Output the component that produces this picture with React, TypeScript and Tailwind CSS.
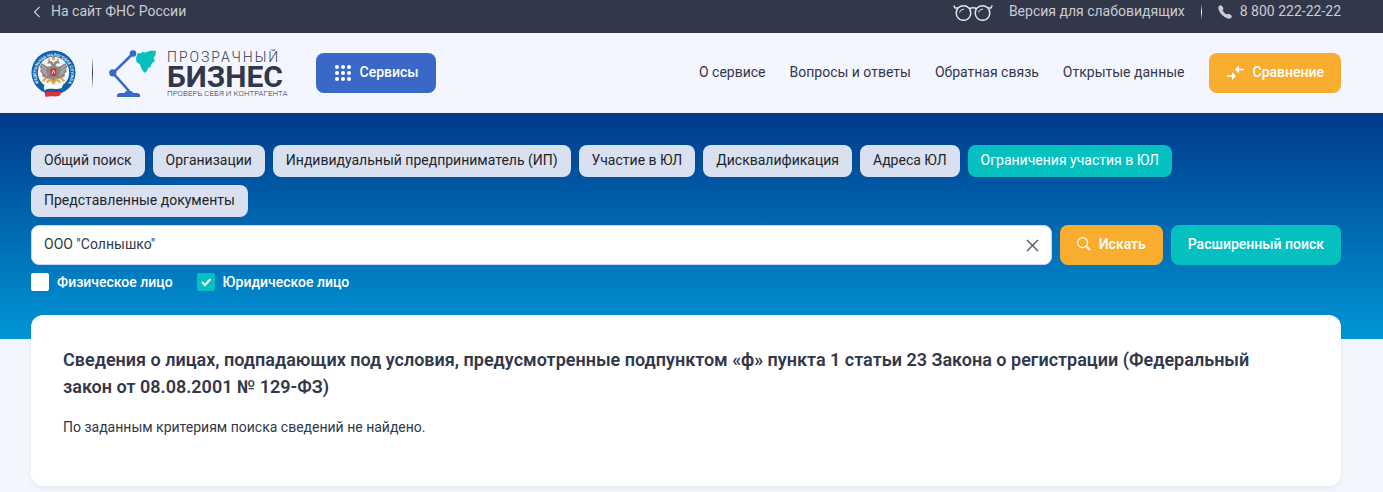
import { useState } from "react";

const tabs = [
  "Общий поиск",
  "Организации",
  "Индивидуальный предприниматель (ИП)",
  "Участие в ЮЛ",
  "Дисквалификация",
  "Адреса ЮЛ",
  "Ограничения участия в ЮЛ",
  "Представленные документы",
];

const links = ["О сервисе", "Вопросы и ответы", "Обратная связь", "Открытые данные"];

function Emblem() {
  return (
    <svg width="45" height="49" viewBox="0 0 46 50" aria-hidden="true">
      <defs>
        <path id="ring" d="M9.600 37 A17.800 17.800 0 1 1 36.400 37" />
      </defs>
      <circle cx="23" cy="24" r="22.500" fill="#0f61a8" />
      <circle cx="23" cy="24" r="16" fill="#f4f6fa" />
      <text fill="#e6f0f8" fontSize="4.200" fontWeight="700" fontFamily="Roboto, sans-serif">
        <textPath href="#ring" startOffset="50%" textAnchor="middle">ФЕДЕРАЛЬНАЯ НАЛОГОВАЯ СЛУЖБА</textPath>
      </text>
      <g fill="#8d8789">
        <path d="M21 17 C16 20 14 15 10.500 14.500 L9 18 L10 20 L9.500 23 L11.500 25 L11.500 28 L14 29 L15 31 L18 30 L20 33 L26 33 L28 30 L31 31 L32 29 L34.500 28 L34.500 25 L36.500 23 L36 20 L37 18 L35.500 14.500 C32 15 30 20 25 17 L26.500 14.500 L29.500 15 L28 12 L24.500 12.500 L23 15 L21.500 12.500 L18 12 L16.500 15 L19.500 14.500 Z" />
      </g>
      <path d="M11 17 L16 21 M11 20 L16 24 M12 23 L17 27 M35 17 L30 21 M35 20 L30 24 M34 23 L29 27" stroke="#d9d6d5" strokeWidth="0.800" />
      <path d="M21 8 h4 l-1 3.500 h-2 Z M17 10 h3 l-0.500 2 h-2 Z M26 10 h3 l-0.500 2 h-2 Z" fill="#d3a650" />
      <rect x="20" y="20" width="6" height="7.500" rx="1" fill="#d8302f" />
      <path d="M21.500 25.500 L23 21.500 L24.500 25" stroke="#f1e6dc" fill="none" />
      <path d="M12 33 L16 29 M30 29 L34 33 M16 34 L20 31 L23 35 L26 31 L30 34" stroke="#dba84a" strokeWidth="2.200" fill="none" />
      <path d="M13 38 C18 34 26 39 33 35 L31 41 C26 43 19 40 14 43.500 Z" fill="#fff" />
      <path d="M14 42 C19 39 26 42.500 31.500 39.500 L31 43.500 C26 46 20 43 14.500 46 Z" fill="#244fa6" />
      <path d="M14 45 C20 42 25 45.500 31 43 L30 47 C26 50 20 47 15 49 Z" fill="#dc3339" />
    </svg>
  );
}

function Lamp() {
  return (
    <svg width="48" height="48" viewBox="0 0 48 48" aria-hidden="true">
      <path d="M23.500 5 L4 24 L20 42" fill="none" stroke="#3a68c9" strokeWidth="2.600" />
      <circle cx="24" cy="4.500" r="3.300" fill="#3a68c9" />
      <circle cx="3.800" cy="23.800" r="3.600" fill="#3a68c9" />
      <path d="M8 48 V46.500 Q8 44 11 44 H15 Q20 38.500 24.500 44 H28 Q31 44 31 46.500 V48 Z" fill="#3a68c9" />
      <path d="M28 6 L29 4 L32 4.500 L33 3 L36.500 3.500 L41 1.800 L47 1.800 L46.500 6 L44.500 9 L46 12 L43 14 L41.500 18 L39 19 L38 22 L36 24 L33.500 21.500 L32 18.500 L31 15.500 L27.500 13 L27 9 Z" fill="#06c0bd" />
    </svg>
  );
}

function Glasses() {
  return (
    <svg width="40" height="18" viewBox="0 0 40 18" fill="none" stroke="#e3e5ea" strokeWidth="1.500" aria-hidden="true">
      <circle cx="10.500" cy="10" r="7.300" />
      <circle cx="29.500" cy="10" r="7.300" />
      <path d="M16.500 5.500 Q20 4 23.500 5.500 M5 5 H2 L0.800 2.500 M35 5 H38 L39.200 2.500" />
      <path d="M6.500 9.500 Q7 6.500 11 6 M25.500 9.500 Q26 6.500 30 6" strokeWidth="1" />
    </svg>
  );
}

export default function App() {
  const [active, setActive] = useState("Ограничения участия в ЮЛ");
  const [query, setQuery] = useState('ООО "Солнышко"');
  const [person, setPerson] = useState(false);
  const [legal, setLegal] = useState(true);

  return (
    <div className="min-h-screen bg-[#f4f6ff] font-[Roboto,sans-serif] text-sm text-[#32374a]">
      <div className="flex items-center justify-between bg-[#32374a] pr-[42px] pb-[10px] pl-[31px] leading-[23px] text-[#c9ccd4]">
        <a href="#" className="flex items-center gap-2">
          <svg width="12" height="12" viewBox="0 0 12 12" fill="none" stroke="currentColor" strokeWidth="1.200" aria-hidden="true">
            <path d="M8.500 1 L3.500 6 L8.500 11" />
          </svg>
          На сайт ФНС России
        </a>
        <div className="flex items-center gap-4">
          <a href="#" className="flex items-center gap-4">
            <Glasses />
            Версия для слабовидящих
          </a>
          <span className="h-4 w-px bg-gradient-to-b from-[#32374a] via-white to-[#32374a]" />
          <a href="tel:88002222222" className="flex items-center gap-2">
            <svg width="14" height="14" viewBox="0 0 14 14" fill="currentColor" aria-hidden="true">
              <path d="M1 1 Q2.800 -0.500 3.800 0.800 L5.200 2.800 Q5.700 3.700 5 4.400 L4.500 5.200 Q5.800 8 8.800 9.500 L9.700 9 Q10.400 8.500 11.200 9 L13.200 10.300 Q14.500 11.300 13 13 Q11.500 14.400 8.500 13 Q3 10.500 0.800 5 Q-0.300 2.200 1 1 Z" />
            </svg>
            8 800 222-22-22
          </a>
        </div>
      </div>

      <header className="flex h-20 items-center justify-between pr-[42px] pl-[31px]">
        <div className="flex items-center gap-7">
          <a href="#" className="flex items-center gap-4">
            <Emblem />
            <span className="h-8 w-px bg-gradient-to-b from-[#f4f6ff] via-[#32374a] to-[#f4f6ff]" />
            <span className="flex items-center gap-[10px]">
              <Lamp />
              <span className="flex flex-col pt-[2px]">
                <span className="text-[14px] leading-[14px] font-light tracking-[2px]">ПРОЗРАЧНЫЙ</span>
                <span className="text-[30px] leading-[26px] font-bold">БИЗНЕС</span>
                <span className="text-[8px] leading-[8px] font-light">ПРОВЕРЬ СЕБЯ И КОНТРАГЕНТА</span>
              </span>
            </span>
          </a>
          <button className="flex h-10 items-center gap-2 rounded-lg bg-[#3a68c9] px-[17px] pb-[2px] font-medium text-white">
            <svg width="19" height="18" viewBox="0 0 19 18" fill="currentColor" aria-hidden="true">
              {[4, 10, 16].map((y) => [4, 10, 16].map((x) => <circle key={x + "-" + y} cx={x} cy={y} r="2" />))}
            </svg>
            Сервисы
          </button>
        </div>
        <nav className="flex items-center gap-6">
          {links.map((l) => (
            <a key={l} href="#" className="pb-[2px]">{l}</a>
          ))}
          <button className="flex h-10 items-center gap-2 rounded-lg bg-[#f9ad2e] px-[17px] pb-[2px] font-medium text-white">
            <svg width="19" height="18" viewBox="0 0 19 18" fill="none" stroke="currentColor" strokeWidth="1.600" aria-hidden="true">
              <path d="M12 6.500 H18 M1 13 H7" />
              <path d="M13 2.500 V10.500 L9 6.500 Z M6 9 V17 L10 13 Z" fill="currentColor" stroke="none" />
            </svg>
            Сравнение
          </button>
        </nav>
      </header>

      <section className="bg-gradient-to-b from-[#003a8c] to-[#0096d6] pt-8 pr-[42px] pb-12 pl-[31px]">
        <div className="flex flex-wrap gap-2">
          {tabs.map((t) => (
            <button
              key={t}
              onClick={() => setActive(t)}
              className={
                t === active
                  ? "h-8 rounded-lg bg-[#04c1bf] px-[13px] pb-[2px] text-white"
                  : "h-8 rounded-lg bg-[#d9e0f0] px-[13px] pb-[2px] text-[#212529]"
              }
            >
              {t}
            </button>
          ))}
        </div>
        <form className="mt-2" onSubmit={(e) => e.preventDefault()}>
          <div className="flex gap-2">
            <div className="flex h-10 flex-1 items-center rounded-lg border border-[#ced4ee] bg-white pr-3">
              <input
                aria-label="Поиск"
                value={query}
                onChange={(e) => setQuery(e.target.value)}
                className="h-full flex-1 rounded-lg px-3 pb-[2px] outline-none"
              />
              <button type="button" aria-label="Очистить" onClick={() => setQuery("")}>
                <svg width="13" height="13" viewBox="0 0 13 13" stroke="#4d5668" strokeWidth="1.400" aria-hidden="true">
                  <path d="M1 1 L12 12 M12 1 L1 12" />
                </svg>
              </button>
            </div>
            <button className="flex items-center gap-2 rounded-lg bg-[#f9ad2e] px-[17px] pb-[2px] font-medium text-white">
              <svg width="14" height="14" viewBox="0 0 15 15" fill="none" stroke="currentColor" aria-hidden="true">
                <circle cx="6" cy="6" r="5.300" strokeWidth="1.300" />
                <path d="M10 10 L14 14" strokeWidth="2" />
              </svg>
              Искать
            </button>
            <button type="button" className="rounded-lg bg-[#04c1bf] px-[17px] pb-[2px] font-medium text-white">
              Расширенный поиск
            </button>
          </div>
          <div className="mt-2 flex gap-6 leading-[18px] font-medium text-white">
            <label className="flex items-center gap-2">
              <input
                type="checkbox"
                checked={person}
                onChange={() => setPerson(!person)}
                className="size-[18px] appearance-none rounded-xs bg-white checked:bg-[#04c1bf]"
              />
              Физическое лицо
            </label>
            <label className="flex items-center gap-2">
              <span className="grid size-[18px]">
                <input
                  type="checkbox"
                  checked={legal}
                  onChange={() => setLegal(!legal)}
                  className="col-start-1 row-start-1 size-[18px] appearance-none rounded-xs bg-white checked:bg-[#04c1bf]"
                />
                <svg
                  className="pointer-events-none col-start-1 row-start-1"
                  width="18"
                  height="18"
                  viewBox="0 0 18 18"
                  fill="none"
                  stroke="#fff"
                  strokeWidth="2"
                  aria-hidden="true"
                >
                  <path d="M5 9 L8 12 L13.500 6" />
                </svg>
              </span>
              Юридическое лицо
            </label>
          </div>
        </form>
      </section>

      <main className="-mt-6 pr-[42px] pl-[31px]">
        <div className="rounded-xl bg-white px-8 pt-[31px] pb-12 shadow-[0_2px_4px_rgba(50,55,74,0.08)]">
          <h1 className="pr-4 text-lg leading-[27px] font-semibold">
            Сведения о лицах, подпадающих под условия, предусмотренные подпунктом «ф» пункта 1 статьи 23 Закона о
            регистрации (Федеральный закон от 08.08.2001 № 129-ФЗ)
          </h1>
          <p className="mt-[17px] leading-[21px]">По заданным критериям поиска сведений не найдено.</p>
        </div>
      </main>
    </div>
  );
}
